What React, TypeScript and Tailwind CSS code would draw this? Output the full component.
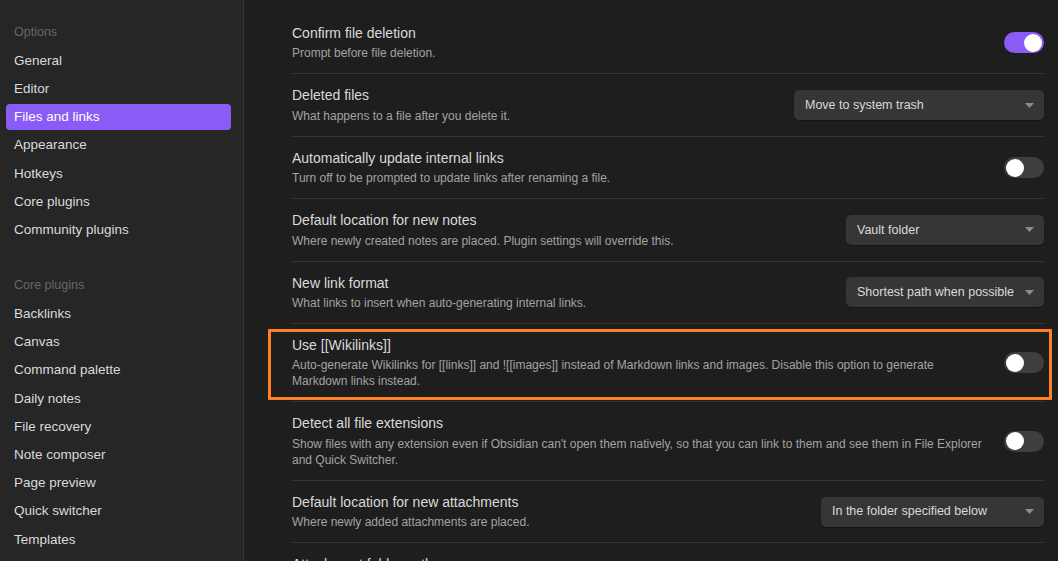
import React from 'react';

const font = { fontFamily: '"Liberation Sans", Arial, sans-serif' };

const optionItems = ['General', 'Editor', 'Files and links', 'Appearance', 'Hotkeys', 'Core plugins', 'Community plugins'];
const pluginItems = [
  'Backlinks',
  'Canvas',
  'Command palette',
  'Daily notes',
  'File recovery',
  'Note composer',
  'Page preview',
  'Quick switcher',
  'Templates',
];

function NavItem({ label, active }: { label: string; active?: boolean }) {
  return (
    <div
      className={
        'ml-[6px] mr-[12px] mb-[2.2px] flex h-[26px] items-center rounded-[4px] px-[8px] text-[13.5px] ' +
        (active ? 'bg-[#8a5cf5] text-white' : 'text-[#dadada]')
      }
    >
      {label}
    </div>
  );
}

function Toggle({ on }: { on?: boolean }) {
  return (
    <div
      className={
        'flex h-[21px] w-[40px] shrink-0 items-center rounded-full px-[2px] ' +
        (on ? 'justify-end bg-[#8a5cf5]' : 'justify-start bg-[#3f3f3f]')
      }
    >
      <div className="h-[18px] w-[18px] rounded-full bg-white" />
    </div>
  );
}

function Dropdown({ value, width }: { value: string; width: string }) {
  return (
    <div
      className={
        'flex h-[30px] shrink-0 items-center justify-between rounded-[5px] bg-[#363636] pl-[11px] pr-[10px] text-[12.5px] text-[#dadada] shadow-[0_1px_1px_rgba(0,0,0,0.3)] ' +
        width
      }
    >
      <span className="whitespace-nowrap">{value}</span>
      <svg width="9" height="5" viewBox="0 0 9 5" className="shrink-0">
        <path d="M0 0 L9 0 L4.5 5 Z" fill="#8c8c8c" />
      </svg>
    </div>
  );
}

function Row({
  title,
  desc,
  control,
  last,
}: {
  title: string;
  desc: string[];
  control: React.ReactNode;
  last?: boolean;
}) {
  return (
    <div className={'flex items-center py-[12px] ' + (last ? '' : 'border-b border-[#363636]')}>
      <div className="min-w-0 flex-1 pr-[20px]">
        <div className="text-[14px] leading-[18.4px] text-[#dadada]">{title}</div>
        <div className="mt-[3px] text-[12px] leading-[16px] text-[#a3a3a3]">
          {desc.map((d) => (
            <div key={d} className="whitespace-nowrap">
              {d}
            </div>
          ))}
        </div>
      </div>
      {control}
    </div>
  );
}

export default function App() {
  return (
    <div className="flex h-[561px] w-[1058px] overflow-hidden bg-[#1e1e1e]" style={font}>
      {/* Sidebar */}
      <div className="h-full w-[244px] shrink-0 border-r border-[#363636] bg-[#262626] pt-[23px]">
        <div className="mb-[7px] px-[14px] text-[12.5px] leading-[18px] text-[#666666]">Options</div>
        {optionItems.map((i) => (
          <NavItem key={i} label={i} active={i === 'Files and links'} />
        ))}
        <div className="mb-[7px] mt-[33px] px-[14px] text-[12.5px] leading-[18px] text-[#666666]">Core plugins</div>
        {pluginItems.map((i) => (
          <NavItem key={i} label={i} />
        ))}
      </div>

      {/* Main */}
      <div className="h-full flex-1 overflow-hidden pl-[48px] pr-[14px] pt-[12px]">
        <Row title="Confirm file deletion" desc={['Prompt before file deletion.']} control={<Toggle on />} />
        <Row
          title="Deleted files"
          desc={['What happens to a file after you delete it.']}
          control={<Dropdown value="Move to system trash" width="w-[250px]" />}
        />
        <Row
          title="Automatically update internal links"
          desc={['Turn off to be prompted to update links after renaming a file.']}
          control={<Toggle />}
        />
        <Row
          title="Default location for new notes"
          desc={['Where newly created notes are placed. Plugin settings will override this.']}
          control={<Dropdown value="Vault folder" width="w-[198px]" />}
        />
        <Row
          title="New link format"
          desc={['What links to insert when auto-generating internal links.']}
          control={<Dropdown value="Shortest path when possible" width="w-[198px]" />}
        />
        <div className="relative">
          <Row
            title="Use [[Wikilinks]]"
            desc={[
              'Auto-generate Wikilinks for [[links]] and ![[images]] instead of Markdown links and images. Disable this option to generate',
              'Markdown links instead.',
            ]}
            control={<Toggle />}
          />
          <div className="pointer-events-none absolute bottom-[2px] left-[-24px] right-[-8px] top-[5px] border-[3px] border-[#ff7f27]" />
        </div>
        <Row
          title="Detect all file extensions"
          desc={[
            "Show files with any extension even if Obsidian can't open them natively, so that you can link to them and see them in File Explorer",
            'and Quick Switcher.',
          ]}
          control={<Toggle />}
        />
        <Row
          title="Default location for new attachments"
          desc={['Where newly added attachments are placed.']}
          control={<Dropdown value="In the folder specified below" width="w-[223px]" />}
        />
        <Row
          title="Attachment folder path"
          desc={['Place newly created attachment files, such as images, in this folder.']}
          control={<div />}
          last
        />
      </div>
    </div>
  );
}
